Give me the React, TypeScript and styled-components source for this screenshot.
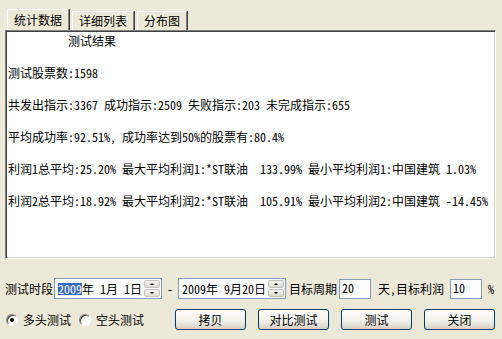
import styled, { createGlobalStyle } from "styled-components";

const GlobalStyle = createGlobalStyle`
  html, body {
    margin: 0;
    padding: 0;
    background: #ece9d8;
  }
  body {
    font-family: "Noto Sans Mono CJK SC", "Noto Sans CJK SC", monospace;
    font-size: 12px;
    color: #000;
  }
`;

const Window = styled.div`
  width: 502px;
  height: 339px;
  background: #ece9d8;
  overflow: hidden;
  position: relative;
`;

const TabStrip = styled.div`
  display: flex;
  align-items: flex-end;
  gap: 3px;
  height: 30px;
  padding-left: 7px;
  box-sizing: border-box;
`;

const Tab = styled.div<{ $active?: boolean }>`
  height: ${(p) => (p.$active ? 21 : 19)}px;
  padding: 0 6px;
  box-sizing: border-box;
  display: flex;
  align-items: center;
  background: #ece9d8;
  border-top: 1px solid #fff;
  border-left: 1px solid #fff;
  border-right: 1px solid #808080;
  box-shadow: 1px 0 0 #404040;
  line-height: 12px;
  white-space: nowrap;
`;

const Memo = styled.div`
  margin: 0 6px 0 5px;
  height: 229px;
  box-sizing: border-box;
  background: #fff;
  border-top: 1px solid #808080;
  border-left: 1px solid #808080;
  border-right: 1px solid #fff;
  border-bottom: 1px solid #fff;
  box-shadow: inset 1px 1px 0 #404040, inset -1px -1px 0 #d4d0c8;
  padding: 2px 0 0 2px;
  white-space: pre;
  line-height: 16px;
  overflow: hidden;
`;

const Controls = styled.div`
  padding: 19px 0 0 5px;
  display: flex;
  flex-direction: column;
  gap: 10px;
`;

const Row = styled.div`
  display: flex;
  align-items: center;
  height: 21px;
  white-space: pre;
`;

const Label = styled.span<{ $ml?: number; $mr?: number }>`
  margin-left: ${(p) => p.$ml ?? 0}px;
  margin-right: ${(p) => p.$mr ?? 0}px;
  line-height: 12px;
`;

const DateBox = styled.div`
  position: relative;
  width: 108px;
  height: 21px;
  box-sizing: border-box;
  border: 1px solid #7f9db9;
  background: #fff;
  display: flex;
  align-items: center;
  padding-left: 3px;
  line-height: 12px;
`;

const Selected = styled.span`
  background: #316ac5;
  color: #fff;
`;

const Spinner = styled.div`
  position: absolute;
  right: 1px;
  top: 1px;
  bottom: 1px;
  width: 16px;
  display: flex;
  flex-direction: column;
  gap: 1px;
`;

const SpinButton = styled.div`
  flex: 1;
  background: linear-gradient(#f4f4f0, #dcdad0);
  border: 1px solid #c2c0b8;
  border-radius: 2px;
  display: flex;
  align-items: center;
  justify-content: center;
`;

const Arrow = styled.span<{ $down?: boolean }>`
  width: 0;
  height: 0;
  border-left: 2px solid transparent;
  border-right: 2px solid transparent;
  ${(p) => (p.$down ? "border-top: 2px solid #000;" : "border-bottom: 2px solid #000;")}
`;

const EditBox = styled.div`
  width: 32px;
  height: 20px;
  box-sizing: border-box;
  border: 1px solid #7f9db9;
  background: #fff;
  padding: 2px 0 0 2px;
  line-height: 12px;
`;

const RadioGroup = styled.label`
  display: flex;
  align-items: center;
  gap: 5px;
  margin-right: 7px;
  line-height: 12px;
`;

const Radio = styled.span<{ $checked?: boolean }>`
  position: relative;
  width: 12px;
  height: 12px;
  box-sizing: border-box;
  border-radius: 50%;
  background: #fff;
  border: 1px solid;
  border-color: #808080 #fff #fff #808080;
  box-shadow: inset 1px 1px 0 #404040;
  margin-left: 1px;
  &::after {
    content: "";
    display: ${(p) => (p.$checked ? "block" : "none")};
    position: absolute;
    left: 3px;
    top: 3px;
    width: 4px;
    height: 4px;
    border-radius: 50%;
    background: #000;
  }
`;

const Buttons = styled.div`
  display: flex;
  gap: 12px;
  margin-left: 24px;
`;

const Button = styled.button`
  width: 71px;
  height: 21px;
  padding: 0;
  border: 1px solid #003c74;
  border-radius: 3px;
  background: linear-gradient(#ffffff, #f0efe8 60%, #d6d0c5);
  font: inherit;
  line-height: 12px;
  color: #000;
`;

const memoText = [
  "          测试结果",
  "",
  "测试股票数:1598",
  "",
  "共发出指示:3367 成功指示:2509 失败指示:203 未完成指示:655",
  "",
  "平均成功率:92.51%, 成功率达到50%的股票有:80.4%",
  "",
  "利润1总平均:25.20% 最大平均利润1:*ST联油  133.99% 最小平均利润1:中国建筑 1.03%",
  "",
  "利润2总平均:18.92% 最大平均利润2:*ST联油  105.91% 最小平均利润2:中国建筑 -14.45%",
].join("\n");

const Spin = () => (
  <Spinner>
    <SpinButton>
      <Arrow />
    </SpinButton>
    <SpinButton>
      <Arrow $down />
    </SpinButton>
  </Spinner>
);

const App = () => {
  return (
    <Window>
      <GlobalStyle />
      <TabStrip>
        <Tab $active>统计数据</Tab>
        <Tab>详细列表</Tab>
        <Tab>分布图</Tab>
      </TabStrip>
      <Memo>{memoText}</Memo>
      <Controls>
        <Row>
          <Label $mr={1}>测试时段</Label>
          <DateBox>
            <Selected>2009</Selected>年 1月 1日
            <Spin />
          </DateBox>
          <Label $ml={5} $mr={5}>-</Label>
          <DateBox>
            2009年 9月20日
            <Spin />
          </DateBox>
          <Label $ml={3} $mr={2}>目标周期</Label>
          <EditBox>20</EditBox>
          <Label $ml={7} $mr={6}>天,目标利润</Label>
          <EditBox>10</EditBox>
          <Label $ml={6}>%</Label>
        </Row>
        <Row>
          <RadioGroup>
            <Radio $checked />
            多头测试
          </RadioGroup>
          <RadioGroup>
            <Radio />
            空头测试
          </RadioGroup>
          <Buttons>
            <Button>拷贝</Button>
            <Button>对比测试</Button>
            <Button>测试</Button>
            <Button>关闭</Button>
          </Buttons>
        </Row>
      </Controls>
    </Window>
  );
};

export default App;
